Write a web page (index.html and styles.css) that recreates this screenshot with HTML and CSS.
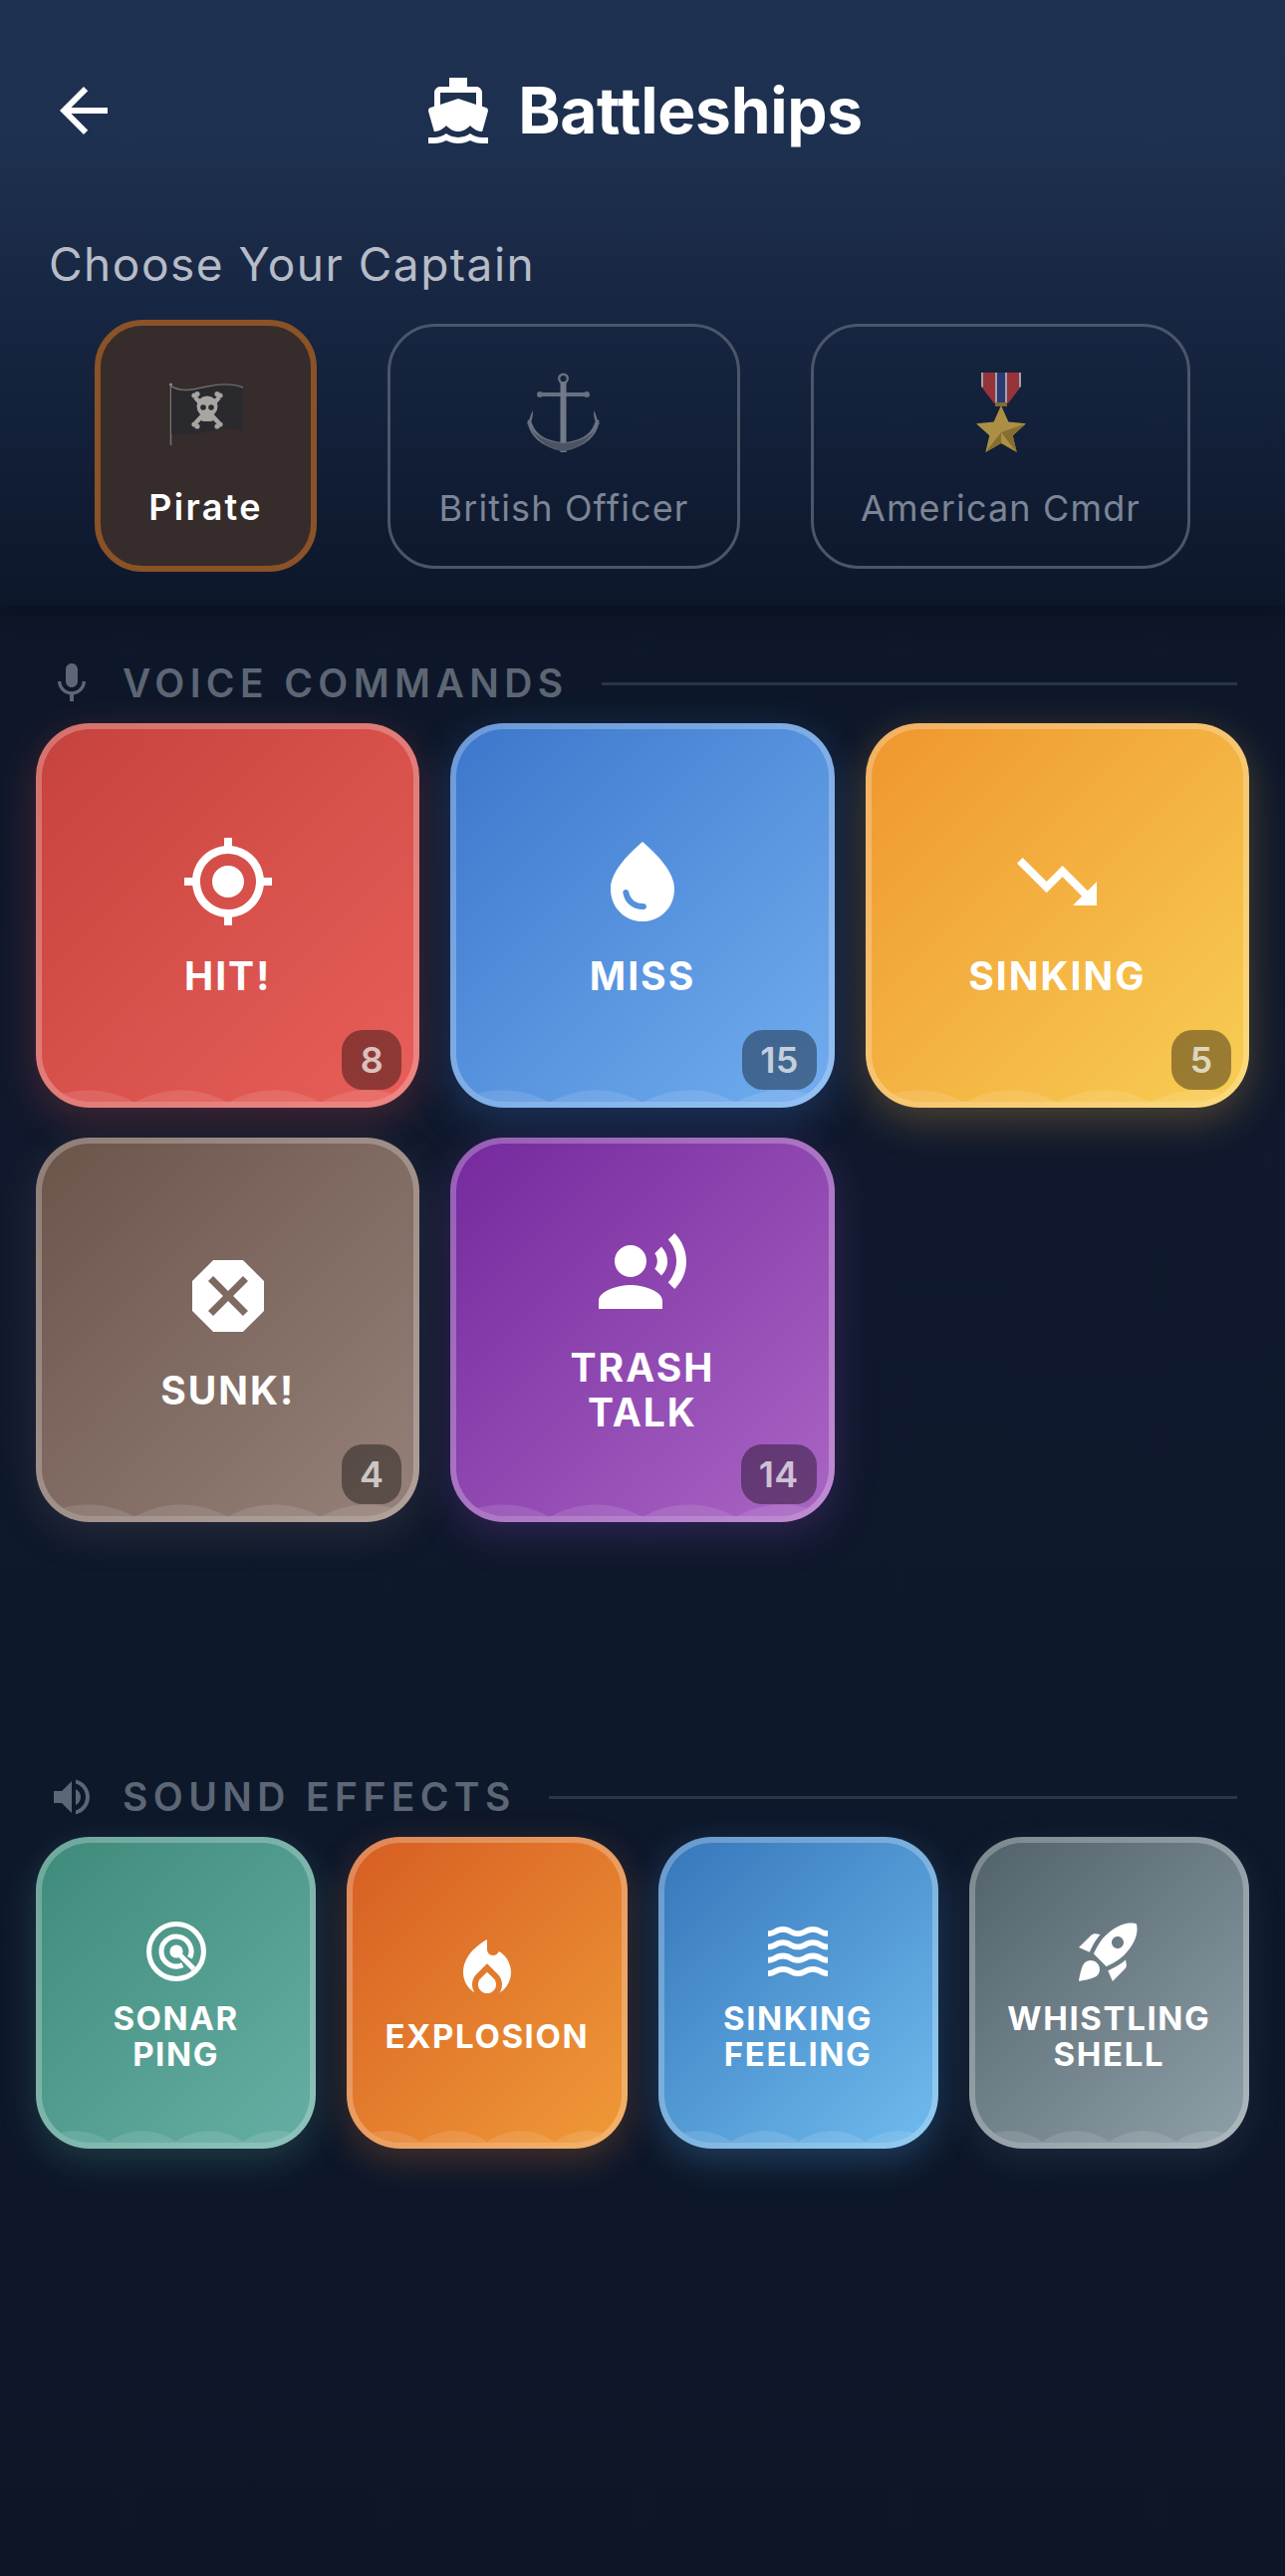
FILE: index.html
```html
<!DOCTYPE html>
<html lang="en">
<head>
<meta charset="utf-8">
<title>Battleships</title>
<link rel="stylesheet" href="styles.css">
</head>
<body>
<div class="app">
  <header class="panel">
    <div class="topbar">
      <svg class="icon72" viewBox="0 0 24 24"><path d="M20 11H7.83l5.59-5.59L12 4l-8 8 8 8 1.41-1.41L7.83 13H20v-2z"/></svg>
      <h1 class="title">
        <svg class="icon72" viewBox="0 0 24 24"><path d="M20 21c-1.39 0-2.78-.47-4-1.32-2.44 1.71-5.56 1.71-8 0C6.78 20.53 5.39 21 4 21H2v2h2c1.38 0 2.74-.35 4-.99 2.52 1.29 5.48 1.29 8 0 1.26.65 2.62.99 4 .99h2v-2h-2zM3.95 19H4c1.6 0 3.02-.88 4-2 .98 1.12 2.4 2 4 2s3.02-.88 4-2c.98 1.12 2.4 2 4 2h.05l1.89-6.68c.08-.26.06-.54-.06-.78s-.34-.42-.6-.5L20 10.62V6c0-1.1-.9-2-2-2h-3V1H9v3H6c-1.1 0-2 .9-2 2v4.62l-1.29.42c-.26.08-.48.26-.6.5s-.15.52-.06.78L3.95 19zM6 6h12v3.97L12 8 6 9.97V6z"/></svg>
        <span>Battleships</span>
      </h1>
      <span></span>
    </div>
    <p class="choose">Choose Your Captain</p>
    <div class="captains">
      <div class="captain captain-pirate">
        <svg class="emoji" viewBox="0 0 80 80">
          <path d="M4.5 13v61" stroke="#77746f" stroke-width="1.5" fill="none"/>
          <circle cx="4.5" cy="13" r="1.6" fill="#8a8781"/>
          <path d="M5 15c12 6 22 3 36 0s26-3 36 1v44c-10-4-20-3-34 0s-27 5-38 2z" fill="#2a292d"/>
          <path d="M5 15c12 6 22 3 36 0s26-3 36 1" stroke="#6f6c6b" stroke-width="1.4" fill="none"/>
          <path d="M29 26l24 26M53 26L29 52" stroke="#a8a5a2" stroke-width="4.5"/>
          <circle cx="28" cy="24" r="2.6" fill="#a8a5a2"/><circle cx="31" cy="22.500" r="2.600" fill="#a8a5a2"/>
          <circle cx="54" cy="24" r="2.6" fill="#a8a5a2"/><circle cx="51" cy="22.500" r="2.600" fill="#a8a5a2"/>
          <circle cx="28" cy="53" r="2.6" fill="#a8a5a2"/><circle cx="31" cy="55" r="2.600" fill="#a8a5a2"/>
          <circle cx="54" cy="53" r="2.6" fill="#a8a5a2"/><circle cx="51" cy="55" r="2.600" fill="#a8a5a2"/>
          <circle cx="41" cy="35" r="10.500" fill="#a8a5a2"/>
          <rect x="35" y="40" width="12" height="10" rx="2" fill="#a8a5a2"/>
          <circle cx="37" cy="36" r="2.800" fill="#2b2a2d"/>
          <circle cx="45" cy="36" r="2.800" fill="#2b2a2d"/>
        </svg>
        <span class="captain-name">Pirate</span>
      </div>
      <div class="captain captain-british">
        <svg class="emoji" viewBox="0 0 80 80">
          <circle cx="39.500" cy="6" r="4.300" fill="none" stroke="#687080" stroke-width="2.400"/>
          <path d="M16 22h47" stroke="#687080" stroke-width="4" stroke-linecap="round"/>
          <circle cx="16" cy="22" r="3" fill="#687080"/><circle cx="63" cy="22" r="3" fill="#687080"/>
          <path d="M36.500 10h6v70h-6z" fill="#727a8a"/>
          <path d="M3 52C8 52 9 45 9 38c-3 5-3 9-6 14zM76 52c-5 0-6-7-6-14 3 5 3 9 6 14z" fill="#687080"/>
          <path d="M3.500 48c1 15 14 27 36 31 22-4 35-16 36-31-3-1-4 1-5 4-4 11-15 17-31 18-16-1-27-7-31-18-1-3-2-5-5-4z" fill="#6a7282"/>
          <path d="M39.500 79c-14-3-26-10-32-22 7 9 18 13 32 14 14-1 25-5 32-14-6 12-18 19-32 22z" fill="#4c5464"/>
        </svg>
        <span class="captain-name">British Officer</span>
      </div>
      <div class="captain captain-american">
        <svg class="emoji" viewBox="0 0 80 80">
          <path d="M20 0h40v14L47 31H33L20 14z" fill="#97343a"/>
          <path d="M36 0h8v31h-8z" fill="#2b3a74"/>
          <path d="M34 0h2v31h-2zM44 0h2v31h-2zM20 0h2v15l-2-1zM58 0h2v14l-2 1z" fill="#9ea3ae"/>
          <path d="M34 30h12v4H34z" fill="#7f6c30"/>
          <path d="M40 33l7.400 16.500 17.600 1.800-13.300 12 4 16.700L40 71l-15.700 9 4-16.700L15 51.300l17.600-1.800z" fill="#ab8f45"/>
          <path d="M40 33v27l15.700 20L51.700 63.300 65 51.300 40 60zM40 60l-15.700 20L40 71z" fill="#866e30"/>
        </svg>
        <span class="captain-name">American Cmdr</span>
      </div>
    </div>
  </header>

  <main class="sections">
    <section>
      <div class="section-head">
        <svg class="icon48" viewBox="0 0 24 24"><path d="M12 14c1.660 0 3-1.340 3-3V5c0-1.660-1.340-3-3-3S9 3.340 9 5v6c0 1.660 1.340 3 3 3zm5.300-3c0 3-2.540 5.100-5.300 5.100S6.700 14 6.700 11H5c0 3.410 2.720 6.230 6 6.720V21h2v-3.280c3.280-.48 6-3.300 6-6.720h-1.700z"/></svg>
        <h2 class="section-title">VOICE COMMANDS</h2>
        <span class="section-rule"></span>
      </div>
      <div class="voice-grid">
        <button class="tile tile-big hit">
          <svg class="icon96" viewBox="0 0 24 24"><path d="M12 8c-2.210 0-4 1.790-4 4s1.790 4 4 4 4-1.790 4-4-1.790-4-4-4zm8.940 3c-.46-4.170-3.770-7.480-7.940-7.940V1h-2v2.060C6.830 3.520 3.520 6.830 3.060 11H1v2h2.060c.46 4.170 3.770 7.480 7.940 7.940V23h2v-2.060c4.170-.46 7.480-3.770 7.940-7.940H23v-2h-2.060zM12 19c-3.870 0-7-3.130-7-7s3.130-7 7-7 7 3.130 7 7-3.130 7-7 7z"/></svg>
          <span class="tile-label">HIT!</span>
          <span class="count">8</span>
        </button>
        <button class="tile tile-big miss">
          <svg class="icon96" viewBox="0 0 24 24"><path d="M12 2c-5.330 4.550-8 8.480-8 11.800 0 4.980 3.800 8.200 8 8.200s8-3.220 8-8.200c0-3.320-2.670-7.250-8-11.800zM7.830 14c.37 0 .67.26.74.62.41 2.220 2.280 2.980 3.640 2.870.43-.02.79.32.79.75 0 .4-.32.73-.72.75-2.130.13-4.620-1.090-5.190-4.120-.08-.45.28-.87.74-.87z"/></svg>
          <span class="tile-label">MISS</span>
          <span class="count">15</span>
        </button>
        <button class="tile tile-big sinking">
          <svg class="icon96" viewBox="0 0 24 24"><path d="M16 18l2.290-2.290-4.880-4.880-4 4L2 7.410 3.410 6l6 6 4-4 6.300 6.290L22 12v6z"/></svg>
          <span class="tile-label">SINKING</span>
          <span class="count">5</span>
        </button>
        <button class="tile tile-big sunk">
          <svg class="icon96" viewBox="0 0 24 24"><path d="M15.730 3H8.270L3 8.270v7.460L8.270 21h7.460L21 15.730V8.270L15.730 3zM17 15.740L15.740 17 12 13.260 8.260 17 7 15.740 10.740 12 7 8.260 8.260 7 12 10.740 15.740 7 17 8.260 13.260 12 17 15.740z"/></svg>
          <span class="tile-label">SUNK!</span>
          <span class="count">4</span>
        </button>
        <button class="tile tile-big trash">
          <svg class="icon96" viewBox="0 0 24 24"><path d="M9 13c2.210 0 4-1.790 4-4s-1.790-4-4-4-4 1.790-4 4 1.790 4 4 4zm0 2c-2.670 0-8 1.340-8 4v2h16v-2c0-2.660-5.330-4-8-4zm7.760-9.640l-1.680 1.690c.84 1.180.84 2.710 0 3.890l1.680 1.690c2.020-2.020 2.020-5.070 0-7.270zM20.070 2l-1.630 1.630c2.770 3.020 2.770 7.560 0 10.740L20.070 16c3.900-3.890 3.910-9.950 0-14z"/></svg>
          <span class="tile-label">TRASH<br>TALK</span>
          <span class="count">14</span>
        </button>
      </div>
    </section>

    <section class="effects">
      <div class="section-head">
        <svg class="icon48" viewBox="0 0 24 24"><path d="M3 9v6h4l5 5V4L7 9H3zm13.500 3c0-1.770-1.020-3.290-2.500-4.030v8.050c1.480-.73 2.500-2.250 2.500-4.020zM14 3.230v2.060c2.890.86 5 3.540 5 6.710s-2.110 5.850-5 6.710v2.060c4.010-.91 7-4.490 7-8.770s-2.990-7.860-7-8.770z"/></svg>
        <h2 class="section-title">SOUND EFFECTS</h2>
        <span class="section-rule"></span>
      </div>
      <div class="sound-grid">
        <button class="tile tile-small sonar">
          <svg class="icon72 icon-sonar" viewBox="0 0 24 24">
            <circle cx="12" cy="12" r="9.150"/>
            <path d="M14.110 16.530A5 5 0 1 1 16.530 14.110"/>
            <path d="M12 12l5.800 5.800"/>
            <circle class="sonar-dot" cx="12" cy="12" r="2.200"/>
          </svg>
          <span class="tile-label">SONAR<br>PING</span>
        </button>
        <button class="tile tile-small explosion">
          <svg class="icon72" viewBox="0 0 24 24"><path d="M12 12.900l-2.130 2.090C9.310 15.550 9 16.280 9 17.060 9 18.680 10.350 20 12 20s3-1.320 3-2.940c0-.78-.31-1.520-.87-2.070L12 12.900z"/><path d="M16 6l-.44.55C14.380 8.020 12 7.190 12 5.300V2S4 6 4 13c0 2.920 1.560 5.470 3.890 6.860-.56-.79-.89-1.760-.89-2.800 0-1.320.52-2.560 1.470-3.500L12 10.100l3.530 3.470c.95.930 1.470 2.170 1.470 3.500 0 1.020-.31 1.960-.85 2.750 1.890-1.150 3.290-3.060 3.710-5.300.66-3.520-1.070-6.880-3.860-8.520z"/></svg>
          <span class="tile-label">EXPLOSION</span>
        </button>
        <button class="tile tile-small feeling">
          <svg class="icon72" viewBox="0 0 24 24"><path d="M17 16.990c-1.350 0-2.200.42-2.950.8-.65.33-1.180.6-2.050.6-.9 0-1.400-.25-2.050-.6-.75-.38-1.570-.8-2.950-.8s-2.200.42-2.950.8c-.65.33-1.170.6-2.050.6v1.950c1.350 0 2.200-.42 2.950-.8.65-.33 1.170-.6 2.050-.6s1.400.25 2.050.6c.75.38 1.570.8 2.950.8s2.200-.42 2.950-.8c.65-.33 1.180-.6 2.050-.6.9 0 1.400.25 2.050.6.75.38 1.580.8 2.950.8v-1.950c-.9 0-1.400-.25-2.050-.6-.75-.38-1.600-.8-2.950-.8zm0-4.450c-1.350 0-2.200.43-2.950.8-.65.32-1.180.6-2.050.6-.9 0-1.400-.25-2.050-.6-.75-.38-1.570-.8-2.950-.8s-2.200.43-2.950.8c-.65.32-1.170.6-2.050.6v1.950c1.350 0 2.200-.43 2.950-.8.65-.35 1.150-.6 2.050-.6s1.400.25 2.050.6c.75.38 1.570.8 2.950.8s2.200-.43 2.950-.8c.65-.35 1.150-.6 2.050-.6s1.400.25 2.050.6c.75.38 1.580.8 2.950.8v-1.950c-.9 0-1.400-.25-2.050-.6-.75-.38-1.600-.8-2.950-.8zm2.950-8.080c-.75-.38-1.580-.8-2.950-.8s-2.200.42-2.950.8c-.65.32-1.180.6-2.050.6-.9 0-1.400-.25-2.050-.6-.75-.37-1.570-.8-2.950-.8s-2.200.42-2.950.8c-.65.33-1.170.6-2.050.6v1.930c1.350 0 2.200-.43 2.950-.8.65-.33 1.170-.6 2.050-.6s1.400.25 2.050.6c.75.38 1.570.8 2.950.8s2.200-.43 2.950-.8c.65-.32 1.180-.6 2.050-.6.9 0 1.400.25 2.050.6.75.38 1.580.8 2.950.8V5.040c-.9 0-1.400-.25-2.050-.58zM17 8.090c-1.350 0-2.200.43-2.950.8-.65.35-1.150.6-2.050.6s-1.400-.25-2.050-.6c-.75-.38-1.570-.8-2.950-.8s-2.200.43-2.950.8c-.65.35-1.150.6-2.050.6v1.950c1.350 0 2.200-.43 2.950-.8.65-.32 1.180-.6 2.050-.6s1.400.25 2.050.6c.75.38 1.570.8 2.950.8s2.200-.43 2.950-.8c.65-.32 1.180-.6 2.050-.6.9 0 1.400.25 2.050.6.75.38 1.580.8 2.950.8V9.490c-.9 0-1.400-.25-2.050-.6-.75-.38-1.600-.8-2.950-.8z"/></svg>
          <span class="tile-label">SINKING<br>FEELING</span>
        </button>
        <button class="tile tile-small whistle">
          <svg class="icon72" viewBox="0 0 24 24"><path d="M9.190 6.350c-2.040 2.290-3.440 5.580-3.570 5.890L2 10.690l4.050-4.050c.47-.47 1.150-.68 1.810-.55l1.330.26zM11.170 17s3.740-1.550 5.890-3.700c5.400-5.400 4.500-9.620 4.210-10.570-.95-.3-5.170-1.190-10.570 4.210C8.550 9.090 7 12.830 7 12.830L11.170 17zm6.480-2.190c-2.290 2.040-5.580 3.440-5.890 3.570L13.310 22l4.050-4.050c.47-.47.68-1.150.55-1.810l-.26-1.330zM9 18c0 .83-.34 1.580-.88 2.120C6.940 21.300 2 22 2 22s.7-4.940 1.880-6.120C4.420 15.340 5.170 15 6 15c1.660 0 3 1.340 3 3zm4-9c0-1.100.9-2 2-2s2 .9 2 2-.9 2-2 2-2-.9-2-2z"/></svg>
          <span class="tile-label">WHISTLING<br>SHELL</span>
        </button>
      </div>
    </section>
  </main>
</div>
</body>
</html>
```

FILE: styles.css
```css
* { box-sizing: border-box; }
html, body { margin: 0; padding: 0; }
body {
  background: linear-gradient(180deg, #0d1729 24%, #10192d 45%, #0e182b 70%, #0c1627 100%);
  font-family: Inter, "Liberation Sans", sans-serif;
  color: #fff;
}
.app { min-height: 2586px; display: flex; flex-direction: column; }

svg { display: block; flex: none; fill: #fff; }
.icon72 { width: 72px; height: 72px; }
.icon96 { width: 96px; height: 96px; }
.icon48 { width: 48px; height: 48px; fill: #5d6674; }

.panel {
  height: 608px;
  padding-top: 75px;
  background: linear-gradient(180deg, #1f3150 0%, #1e304f 25%, #172642 50%, #0f1a30 90%, #0d172b 100%);
  box-shadow: 0 6px 24px rgba(0, 0, 0, .25);
  position: relative;
}
.topbar {
  display: grid;
  grid-template-columns: 72px 1fr 72px;
  align-items: center;
  padding: 0 48px;
}
.title {
  margin: 0;
  display: flex;
  align-items: center;
  justify-content: center;
  gap: 24px;
  font-size: 64px;
  line-height: 72px;
  font-weight: 700;
  letter-spacing: -.3px;
}
.choose {
  margin: 91px 0 29px;
  padding-left: 49px;
  font-size: 46px;
  line-height: 54px;
  letter-spacing: 1.5px;
  color: #b6bcc7;
}
.captains {
  display: flex;
  align-items: center;
  justify-content: center;
  gap: 71px;
  height: 253px;
}
.captain {
  display: flex;
  flex-direction: column;
  align-items: center;
  padding-top: 46px;
  border-radius: 48px;
  border: 3px solid #4a5669;
  height: 246px;
}
.captain-pirate {
  width: 223px;
  height: 253px;
  border: 6px solid #8a5227;
  background: #362c2b;
}
.captain-british { width: 354px; }
.captain-american { width: 381px; }
.emoji { width: 80px; height: 80px; }
.captain-name {
  margin-top: 34px;
  font-size: 36px;
  line-height: 44px;
  letter-spacing: 1.150px;
  color: #7c8595;
}
.captain-pirate .captain-name { color: #fff; font-weight: 600; letter-spacing: 2.300px; }

.sections { padding-top: 54px; }
.section-head {
  display: flex;
  align-items: center;
  padding: 0 48px;
  height: 48px;
}
.section-title {
  margin: 0 33px 0 27px;
  font-size: 39px;
  line-height: 48px;
  font-weight: 600;
  letter-spacing: 5.400px;
  color: #5d6674;
  white-space: nowrap;
}
.section-rule { flex: 1; height: 3px; background: #2a3548; }
.voice-grid, .sound-grid {
  display: grid;
  gap: 30px 31px;
  padding: 0 36px;
  margin-top: 16px;
}
.voice-grid { grid-template-columns: repeat(3, 1fr); grid-auto-rows: 386px; }
.sound-grid { grid-template-columns: repeat(4, 1fr); grid-auto-rows: 313px; }
.effects { margin-top: 252px; }

.tile {
  position: relative;
  display: flex;
  flex-direction: column;
  align-items: center;
  justify-content: center;
  padding: 0;
  overflow: hidden;
  border: 6px solid rgba(255, 255, 255, .25);
  border-radius: 54px;
  background-origin: border-box;
  background-clip: border-box;
  color: #fff;
  font-family: inherit;
  text-align: center;
}
.tile::after {
  content: "";
  position: absolute;
  left: 0;
  right: 0;
  bottom: 0;
  height: 12px;
  background-image: radial-gradient(circle var(--scallop) at 50% var(--scallop), rgba(255, 255, 255, .11) 99%, transparent 100%);
  background-size: 25% 100%;
  background-repeat: repeat-x;
  pointer-events: none;
}
.tile-big { --scallop: 94px; }
.tile-small { --scallop: 58px; padding-top: 2px; }
.tile-label {
  font-weight: 700;
  letter-spacing: 2px;
}
.tile-big .tile-label { margin-top: 24px; font-size: 39px; line-height: 45px; }
.tile-small .tile-label { margin-top: 13px; font-size: 33px; line-height: 36px; letter-spacing: 1.600px; }
.count {
  position: absolute;
  right: 12px;
  bottom: 12px;
  min-width: 60px;
  height: 60px;
  padding: 0 18px;
  border-radius: 21px;
  background: rgba(0, 0, 0, .38);
  color: rgba(255, 255, 255, .7);
  font-size: 36px;
  font-weight: 600;
  line-height: 60px;
  letter-spacing: .3px;
  z-index: 1;
}

.hit { background-image: linear-gradient(135deg, #c6423c, #e95f5a); box-shadow: 0 12px 40px rgba(232, 80, 70, .25); }
.miss { background-image: linear-gradient(135deg, #3b76cb, #72aef0); box-shadow: 0 12px 40px rgba(70, 140, 240, .25); }
.sinking { background-image: linear-gradient(135deg, #ef962e, #f8ce54); box-shadow: 0 12px 40px rgba(245, 180, 70, .28); }
.sunk { background-image: linear-gradient(135deg, #6b544a, #96827a); box-shadow: 0 12px 40px rgba(150, 130, 120, .18); }
.trash { background-image: linear-gradient(135deg, #74289d, #aa66c4); box-shadow: 0 12px 40px rgba(150, 70, 200, .25); }
.sonar { background-image: linear-gradient(135deg, #3e8a7a, #67afa4); box-shadow: 0 12px 36px rgba(90, 180, 165, .22); }
.explosion { background-image: linear-gradient(135deg, #d65d22, #f09b38); box-shadow: 0 12px 36px rgba(230, 120, 50, .25); }
.feeling { background-image: linear-gradient(135deg, #3576ba, #70bcee); box-shadow: 0 12px 36px rgba(80, 160, 230, .28); }
.whistle { background-image: linear-gradient(135deg, #506169, #90a0a8); box-shadow: 0 12px 36px rgba(140, 160, 170, .12); }

.icon-sonar { fill: none; stroke: #fff; stroke-width: 1.700; }
.icon-sonar .sonar-dot { fill: #fff; stroke: none; }
```
